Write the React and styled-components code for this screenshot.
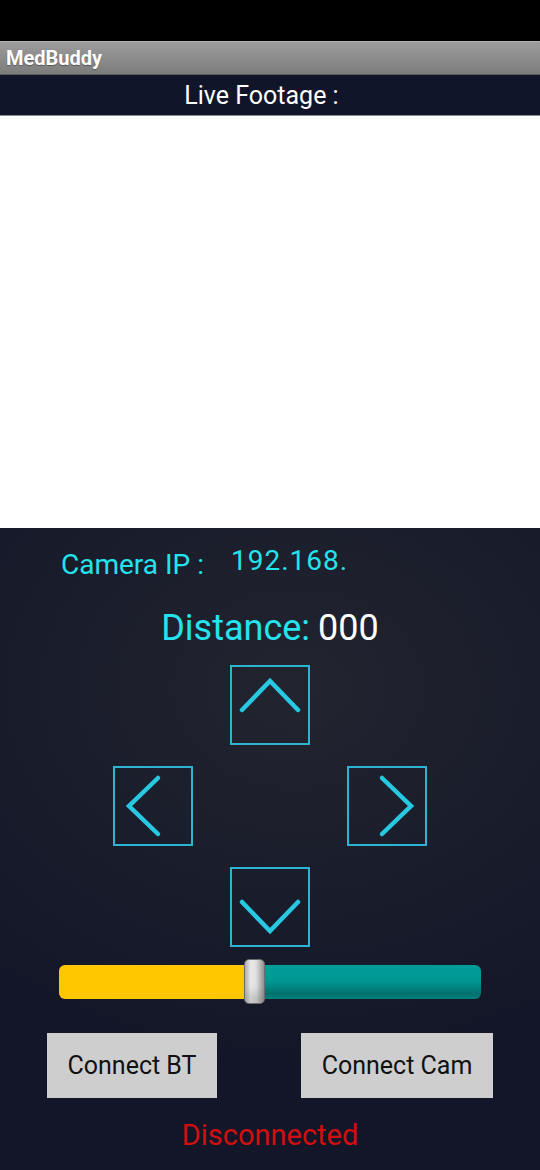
import React from "react";
import styled, { createGlobalStyle } from "styled-components";

const GlobalStyle = createGlobalStyle`
  html, body {
    margin: 0;
    padding: 0;
    background: #131829;
  }
  body {
    font-family: Roboto, "Liberation Sans", sans-serif;
  }
`;

const Screen = styled.div`
  width: 540px;
  min-height: 1170px;
  display: flex;
  flex-direction: column;
`;

const StatusBar = styled.div`
  height: 41px;
  background: #000;
`;

const TitleBar = styled.div`
  height: 32px;
  display: flex;
  align-items: center;
  padding-left: 6px;
  background: linear-gradient(#9c9c9c, #7c7c7c);
  border-top: 1px solid #b0b0b0;
  border-bottom: 1px solid #5a5a5a;
  color: #fff;
  font-weight: 700;
  font-size: 20px;
  text-shadow: 0 1px 1px rgba(0, 0, 0, 0.35);
`;

const Header = styled.div`
  height: 40px;
  display: flex;
  align-items: center;
  justify-content: center;
  padding-right: 17px;
  background: #11152a;
  border-bottom: 1px solid #8a8c94;
  color: #fff;
  font-size: 25px;
`;

const Footage = styled.div`
  height: 412px;
  background: #fff;
`;

const Panel = styled.div`
  flex: 1;
  display: flex;
  flex-direction: column;
  align-items: center;
  background: radial-gradient(ellipse 90% 60% at 55% 25%, #22242f 0%, #1a1d2b 50%, #121628 100%);
  padding-top: 18px;
`;

const IpRow = styled.div`
  align-self: flex-start;
  margin-left: 61px;
  display: flex;
  align-items: center;
  gap: 27px;
  height: 36px;
  color: #24e3ec;
  font-size: 28px;
`;

const IpValue = styled.span`
  position: relative;
  top: -4px;
  letter-spacing: 1px;
`;

const DistanceRow = styled.div`
  margin-top: 25px;
  height: 42px;
  display: flex;
  align-items: center;
  gap: 8px;
  font-size: 36px;
  color: #24e3ec;
`;

const DistanceValue = styled.span`
  color: #fff;
`;

const Pad = styled.div`
  margin-top: 16px;
  display: grid;
  grid-template-columns: repeat(3, 80px);
  grid-template-rows: repeat(3, 80px);
  column-gap: 37px;
  row-gap: 21px;
`;

const ArrowButton = styled.button`
  grid-column: ${(p) => p.col};
  grid-row: ${(p) => p.row};
  width: 80px;
  height: 80px;
  padding: 0;
  background: transparent;
  border: 2px solid #2cb4d2;
  display: flex;
  align-items: center;
  justify-content: center;
  cursor: pointer;
  svg {
    display: block;
  }
`;

const Slider = styled.div`
  margin-top: 12px;
  width: 422px;
  height: 45px;
  display: flex;
  align-items: center;
  position: relative;
`;

const TrackFill = styled.div`
  width: 190px;
  height: 34px;
  background: #ffc700;
  border-radius: 6px 0 0 6px;
`;

const TrackRest = styled.div`
  flex: 1;
  height: 34px;
  background: linear-gradient(#019d98 0%, #019893 45%, #00706e 85%, #00807c 100%);
  border-radius: 0 6px 6px 0;
`;

const Thumb = styled.div`
  position: absolute;
  left: 185px;
  top: 0;
  width: 19px;
  height: 43px;
  border: 1px solid #6d6d6d;
  border-radius: 5px;
  background: linear-gradient(90deg, #bdbdbd 0%, #ececec 30%, #dedede 60%, #9c9c9c 100%);
  box-shadow: inset 0 -10px 10px rgba(0, 0, 0, 0.15);
`;

const ButtonRow = styled.div`
  margin-top: 29px;
  width: 446px;
  display: flex;
  justify-content: space-between;
`;

const ActionButton = styled.button`
  width: ${(p) => p.w}px;
  height: 65px;
  border: none;
  border-radius: 0;
  background: #cecece;
  color: #111;
  font-family: Roboto, "Liberation Sans", sans-serif;
  font-size: 25px;
  padding: 0;
  cursor: pointer;
`;

const Status = styled.div`
  margin-top: 20px;
  font-size: 29px;
  color: #d00f10;
`;

const Chevron = ({ points }) => (
  <svg width="76" height="76" viewBox="2 2 76 76">
    <polyline
      points={points}
      fill="none"
      stroke="#27c8e2"
      strokeWidth="4.5"
      strokeLinecap="round"
      strokeLinejoin="miter"
    />
  </svg>
);

export default function App() {
  return (
    <Screen>
      <GlobalStyle />
      <StatusBar />
      <TitleBar>MedBuddy</TitleBar>
      <Header>Live Footage :</Header>
      <Footage />
      <Panel>
        <IpRow>
          <span>Camera IP :</span>
          <IpValue>192.168.</IpValue>
        </IpRow>
        <DistanceRow>
          <span>Distance:</span>
          <DistanceValue>000</DistanceValue>
        </DistanceRow>
        <Pad>
          <ArrowButton col={2} row={1} aria-label="up">
            <Chevron points="12,45 40,16 68,45" />
          </ArrowButton>
          <ArrowButton col={1} row={2} aria-label="left">
            <Chevron points="45,12 16,40 45,68" />
          </ArrowButton>
          <ArrowButton col={3} row={2} aria-label="right">
            <Chevron points="35,12 64,40 35,68" />
          </ArrowButton>
          <ArrowButton col={2} row={3} aria-label="down">
            <Chevron points="12,35 40,64 68,35" />
          </ArrowButton>
        </Pad>
        <Slider>
          <TrackFill />
          <TrackRest />
          <Thumb />
        </Slider>
        <ButtonRow>
          <ActionButton w={170}>Connect BT</ActionButton>
          <ActionButton w={192}>Connect Cam</ActionButton>
        </ButtonRow>
        <Status>Disconnected</Status>
      </Panel>
    </Screen>
  );
}
